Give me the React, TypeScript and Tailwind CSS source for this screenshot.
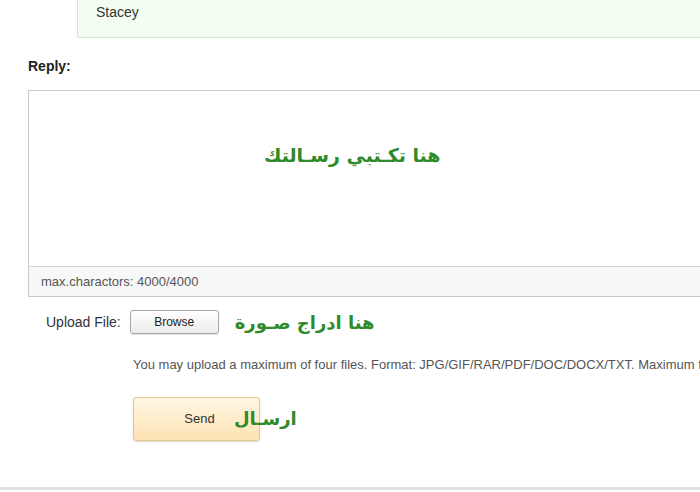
export default function App() {
  const arabic = "font-['DejaVu_Sans',sans-serif] font-bold text-[#2f8a2a]";

  return (
    <div className="relative h-[492px] w-[700px] overflow-hidden bg-white font-['Liberation_Sans',Arial,sans-serif] text-[#333]">
      {/* previous message box */}
      <div className="ml-[77px] h-[38px] w-[640px] rounded-bl-[3px] border-b border-l border-[#cfe9c6] bg-[#f3fdf1] pl-[18px] pt-[2px] text-[14px]">
        Stacey
      </div>

      <div className="pl-[28px]">
        <p className="mt-[18px] text-[14px] font-bold text-[#222]">Reply:</p>

        <div className="mt-[13px] w-[700px] border border-[#c8c8c8]">
          <div className="h-[175px] bg-white pl-[235px] pt-[50px]">
            <span dir="rtl" className={`${arabic} block w-fit text-[19px]`}>
              هنا تكـتبي رسـالتك
            </span>
          </div>
          <div className="h-[30px] border-t border-[#d4d4d4] bg-[#f8f8f8] pl-[12px] pt-[5px] text-[13px] text-[#555]">
            max.charactors: 4000/4000
          </div>
        </div>

        <div className="mt-[11px] flex h-[28px] items-center">
          <span className="ml-[18px] text-[14px] text-[#333]">Upload File:</span>
          <button className="ml-[9px] h-[24px] w-[89px] rounded-[3px] border border-[#a9a9a9] bg-gradient-to-b from-white to-[#ececec] text-[12px] text-[#222] shadow-[0_1px_1px_rgba(0,0,0,0.12)]">
            Browse
          </button>
          <span dir="rtl" className={`${arabic} ml-[16px] text-[18px]`}>
            هنا ادراج صـورة
          </span>
        </div>

        <p className="ml-[105px] mt-[19px] whitespace-nowrap text-[13px] text-[#555]">
          You may upload a maximum of four files. Format: JPG/GIF/RAR/PDF/DOC/DOCX/TXT. Maximum file size: 2MB.
        </p>

        <div className="ml-[105px] mt-[22px] flex items-center">
          <button className="h-[44px] w-[127px] rounded-[3px] border border-[#e6c88c] bg-gradient-to-b from-[#fff6e3] to-[#fde2b3] pl-[6px] text-[13px] text-[#333] shadow-[0_1px_2px_rgba(0,0,0,0.15)]">
            Send
          </button>
          <span dir="rtl" className={`${arabic} -ml-[26px] text-[18px]`}>
            ارسـال
          </span>
        </div>
      </div>

      <div className="absolute bottom-[2px] left-0 h-[3px] w-full bg-[#e2e2e2]" />
    </div>
  );
}
